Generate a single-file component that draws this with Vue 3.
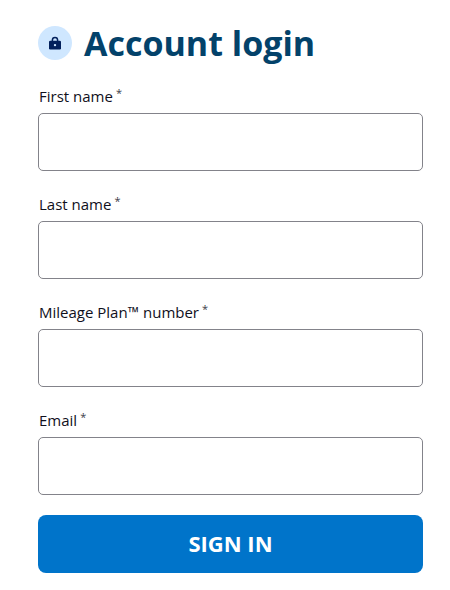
<script setup>
import { reactive } from 'vue'

const fields = [
  { id: 'first-name', label: 'First name', type: 'text' },
  { id: 'last-name', label: 'Last name', type: 'text' },
  { id: 'mileage-number', label: 'Mileage Plan™ number', type: 'text' },
  { id: 'email', label: 'Email', type: 'email' },
]

const form = reactive({
  'first-name': '',
  'last-name': '',
  'mileage-number': '',
  email: '',
})
</script>

<template>
  <main class="login">
    <header class="heading">
      <span class="badge">
        <svg class="lock" viewBox="0 0 12 14" aria-hidden="true">
          <path d="M3.4 6V4a2.6 2.6 0 0 1 5.2 0v2" fill="none" stroke="#03205c" stroke-width="1.5" />
          <rect x="0" y="4.8" width="12" height="8.6" rx="1.2" fill="#03205c" />
          <circle cx="6" cy="9.1" r="1.2" fill="#cfe7ff" />
        </svg>
      </span>
      <h1 class="title">Account login</h1>
    </header>

    <form class="form" @submit.prevent>
      <div v-for="field in fields" :key="field.id" class="field">
        <label class="label" :for="field.id">
          {{ field.label }}<span class="required">*</span>
        </label>
        <input :id="field.id" v-model="form[field.id]" class="input" :type="field.type" required />
      </div>
      <button class="submit" type="submit">SIGN IN</button>
    </form>
  </main>
</template>

<style>
body {
  margin: 0;
  background: #fff;
}
</style>

<style scoped>
.login {
  box-sizing: border-box;
  padding: 16px 27px 16px 38px;
  font-family: "Open Sans", "Noto Sans", sans-serif;
  color: #10101c;
}

.heading {
  display: flex;
  align-items: center;
  gap: 12px;
  height: 54px;
}

.badge {
  display: flex;
  flex: none;
  align-items: center;
  justify-content: center;
  width: 34px;
  height: 34px;
  border-radius: 50%;
  background: #cfe7ff;
}

.lock {
  width: 12px;
  height: 14px;
}

.title {
  margin: 0;
  font-size: 34px;
  font-weight: 700;
  line-height: 54px;
  color: #03426a;
  white-space: nowrap;
}

.form {
  display: flex;
  flex-direction: column;
  gap: 20px;
  margin-top: 13px;
}

.field {
  display: flex;
  flex-direction: column;
}

.label {
  display: flex;
  gap: 3px;
  height: 30px;
  padding-left: 1px;
  font-size: 15px;
  line-height: 27px;
}

.required {
  font-size: 11px;
  line-height: 20px;
  color: #3c3c48;
}

.input {
  box-sizing: border-box;
  width: 100%;
  height: 58px;
  padding: 0 16px;
  border: 1px solid #83838a;
  border-radius: 5px;
  background: #fff;
  font: inherit;
  font-size: 16px;
  color: inherit;
}

.submit {
  height: 58px;
  padding: 0 16px 2px;
  border: 0;
  border-radius: 8px;
  background: #0074ca;
  font: inherit;
  font-size: 22px;
  font-weight: 700;
  color: #fff;
  cursor: pointer;
}
</style>
